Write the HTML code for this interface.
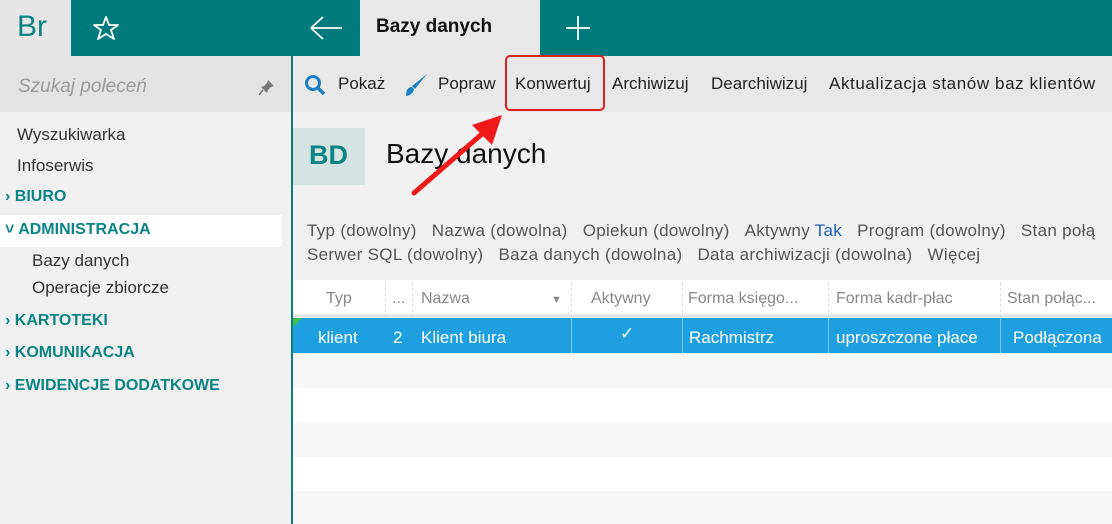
<!DOCTYPE html><html><head><meta charset="utf-8"><style>
*{margin:0;padding:0;box-sizing:border-box}
body{width:1112px;height:524px;overflow:hidden;font-family:"Liberation Sans",sans-serif;background:#f0f0f0;position:relative;color:#222}
.a{position:absolute;white-space:nowrap}
.teal{color:#0b8484}
.sb{font-size:17px;color:#333}
.sec{font-size:16px;color:#0b8484;font-weight:bold}
.tb{font-size:17px;top:74px;color:#222}
.f{font-size:17px;color:#555}
.h{font-size:16px;color:#888;top:290px}
.r{font-size:17px;color:#fff;top:328px}
.sep{position:absolute;top:283px;height:34px;border-left:1px dashed #ddd}
.sep2{position:absolute;top:318px;height:35px;border-left:1px solid #7cc5ec}
</style></head><body>
<div class="a" style="left:0;top:0;width:71px;height:56px;background:#e6e6e6"></div>
<div class="a teal" style="left:17px;top:10px;font-size:30px">Br</div>
<div class="a" style="left:71px;top:0;width:1041px;height:56px;background:#007b7b"></div>
<svg class="a" style="left:92px;top:15px" width="28" height="26" viewBox="0 0 28 26"><polygon points="14,2 17,10 26,10 19,15 22,24 14,19 6,24 9,15 2,10 11,10" fill="none" stroke="#fff" stroke-width="1.8" stroke-linejoin="round"/></svg>
<svg class="a" style="left:308px;top:14px" width="36" height="28"><path d="M3 14H34M3 14L15 3M3 14L15 25" stroke="#fff" stroke-width="1.8" fill="none"/></svg>
<div class="a" style="left:360px;top:0;width:180px;height:56px;background:#e8e8e8"></div>
<div class="a" style="left:376px;top:16px;font-size:19px;font-weight:bold;color:#111">Bazy danych</div>
<svg class="a" style="left:565px;top:14px" width="26" height="28"><path d="M13 2V26M1 14H25" stroke="#fff" stroke-width="1.8"/></svg>
<div class="a" style="left:0;top:56px;width:291px;height:56px;background:#e3e3e3"></div>
<div class="a" style="left:18px;top:76px;font-size:19px;font-style:italic;color:#999">Szukaj poleceń</div>
<svg class="a" style="left:258px;top:78px" width="18" height="18"><path d="M10 2L16 8L13 9L10 12L9 15L3 9L6 8L9 5Z" fill="#777"/><path d="M5 12L1 17" stroke="#777" stroke-width="1.5"/></svg>
<div class="a" style="left:291px;top:56px;width:2px;height:468px;background:#0b7b7b"></div>
<div class="a" style="left:293px;top:56px;width:819px;height:56px;background:#e8e8e8"></div>
<div class="a sb" style="left:17px;top:125px">Wyszukiwarka</div>
<div class="a sb" style="left:17px;top:156px">Infoserwis</div>
<div class="a sec" style="left:5px;top:188px">› BIURO</div>
<div class="a" style="left:0;top:215px;width:282px;height:32px;background:#fff"></div>
<div class="a sec" style="left:5px;top:221px">˅ ADMINISTRACJA</div>
<div class="a sb" style="left:32px;top:251px">Bazy danych</div>
<div class="a sb" style="left:32px;top:278px">Operacje zbiorcze</div>
<div class="a sec" style="left:5px;top:312px">› KARTOTEKI</div>
<div class="a sec" style="left:5px;top:344px">› KOMUNIKACJA</div>
<div class="a sec" style="left:5px;top:377px">› EWIDENCJE DODATKOWE</div>
<svg class="a" style="left:304px;top:74px" width="22" height="22"><circle cx="9" cy="9" r="6.5" stroke="#1c7fc0" stroke-width="3" fill="none"/><path d="M14 14L20 20" stroke="#1c7fc0" stroke-width="3.5"/></svg>
<div class="a tb" style="left:338px">Pokaż</div>
<svg class="a" style="left:404px;top:73px" width="24" height="24"><path d="M23 1L11 16L8 13Z" fill="#1c7fc0"/><path d="M8 14Q2 14 2 23Q9 22 10 16Z" fill="#1c7fc0"/></svg>
<div class="a tb" style="left:438px">Popraw</div>
<div class="a tb" style="left:515px">Konwertuj</div>
<div class="a tb" style="left:612px">Archiwizuj</div>
<div class="a tb" style="left:711px">Dearchiwizuj</div>
<div class="a tb" style="left:829px;letter-spacing:0.6px">Aktualizacja stanów baz klientów</div>
<div class="a" style="left:505px;top:55px;width:100px;height:56px;border:2px solid #e02020;border-radius:5px"></div>
<div class="a" style="left:293px;top:128px;width:72px;height:57px;background:#d5e3e3"></div>
<div class="a teal" style="left:309px;top:140px;font-size:27px;font-weight:bold">BD</div>
<div class="a" style="left:386px;top:138px;font-size:28px;color:#111">Bazy danych</div>
<svg class="a" style="left:400px;top:105px" width="110" height="100"><path d="M14 88L90 22" stroke="#f01818" stroke-width="5" stroke-linecap="round"/><polygon points="102,10 72,20 92,40" fill="#f01818"/></svg>
<div class="a f" style="left:307px;top:221px;letter-spacing:0.3px">Typ (dowolny)&nbsp;&nbsp;&nbsp;Nazwa (dowolna)&nbsp;&nbsp;&nbsp;Opiekun (dowolny)&nbsp;&nbsp;&nbsp;Aktywny <span style="color:#1c5fb0">Tak</span>&nbsp;&nbsp;&nbsp;Program (dowolny)&nbsp;&nbsp;&nbsp;Stan połą</div>
<div class="a f" style="left:307px;top:245px;letter-spacing:0.3px">Serwer SQL (dowolny)&nbsp;&nbsp;&nbsp;Baza danych (dowolna)&nbsp;&nbsp;&nbsp;Data archiwizacji (dowolna)&nbsp;&nbsp;&nbsp;Więcej</div>
<div class="a" style="left:293px;top:280px;width:819px;height:37px;background:#fff;border-bottom:3px solid #e6e6e6"></div>
<div class="sep" style="left:385px"></div><div class="sep" style="left:412px"></div><div class="sep" style="left:571px"></div><div class="sep" style="left:682px"></div><div class="sep" style="left:828px"></div><div class="sep" style="left:1000px"></div>
<div class="a h" style="left:326px">Typ</div><div class="a h" style="left:392px">...</div><div class="a h" style="left:421px">Nazwa</div><div class="a h" style="left:551px;font-size:11px;top:294px">▼</div>
<div class="a h" style="left:591px">Aktywny</div><div class="a h" style="left:688px">Forma księgo...</div><div class="a h" style="left:836px">Forma kadr-płac</div><div class="a h" style="left:1007px">Stan połąc...</div>
<div class="a" style="left:293px;top:318px;width:819px;height:35px;background:#1ea0e0"></div>
<div class="a" style="left:293px;top:318px;width:0;height:0;border-top:9px solid #3cc04c;border-right:9px solid transparent"></div>
<div class="sep2" style="left:571px"></div><div class="sep2" style="left:682px"></div><div class="sep2" style="left:828px"></div><div class="sep2" style="left:1000px"></div>
<div class="a r" style="left:318px">klient</div><div class="a r" style="left:393px">2</div><div class="a r" style="left:421px">Klient biura</div><div class="a r" style="left:620px;top:324px">✓</div>
<div class="a r" style="left:689px">Rachmistrz</div><div class="a r" style="left:836px">uproszczone płace</div><div class="a r" style="left:1013px">Podłączona</div>
<div class="a" style="left:293px;top:353px;width:819px;height:35px;background:#f7f7f7"></div>
<div class="a" style="left:293px;top:388px;width:819px;height:34px;background:#fff"></div>
<div class="a" style="left:293px;top:422px;width:819px;height:35px;background:#f7f7f7"></div>
<div class="a" style="left:293px;top:457px;width:819px;height:34px;background:#fff"></div>
<div class="a" style="left:293px;top:491px;width:819px;height:33px;background:#f7f7f7"></div>
</body></html>
